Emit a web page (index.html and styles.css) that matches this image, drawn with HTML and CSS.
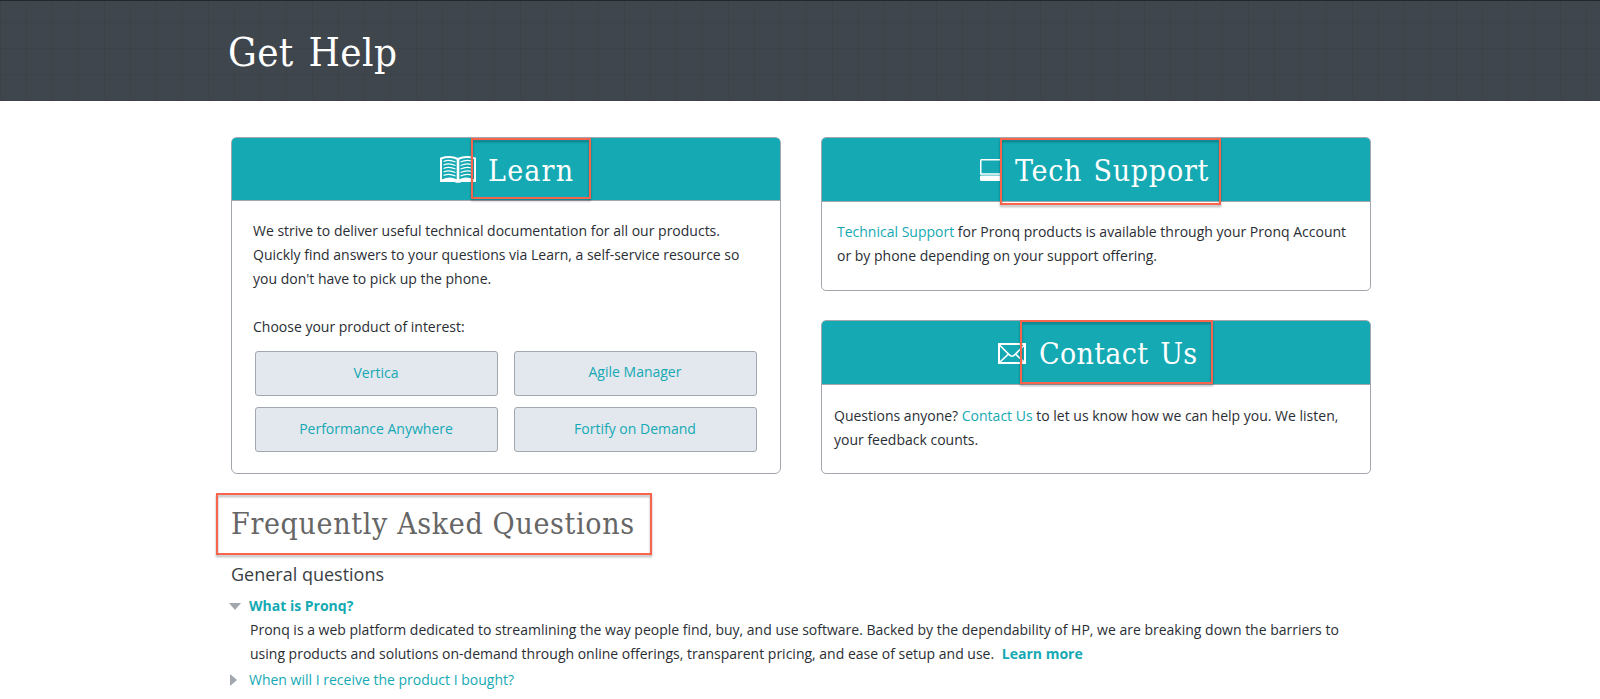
FILE: index.html
```html
<!DOCTYPE html>
<html lang="en">
<head>
<meta charset="utf-8">
<title>Get Help</title>
<link rel="stylesheet" href="styles.css">
</head>
<body>
<header class="banner"><h1 class="slab banner-title">Get Help</h1></header>
<main class="page">
  <div class="cards">
    <section class="card card-learn">
      <div class="card-head">
        <svg class="icon" width="36" height="27" viewBox="0 0 36 27"><path d="M1 25V2.500Q10-.5 18 3Q26-.5 35 2.500V25H21Q18 26.500 15 25Z" fill="none" stroke="#fff" stroke-width="2"/><path d="M18 3V25" stroke="#fff" stroke-width="2.600"/><path d="M2 24Q10 20 17 24ZM19 24Q26 20 34 24Z" fill="#fff" stroke="#fff"/><path d="M3.500 5.500Q9 3 15.500 6M3.500 9Q9 6.500 15.500 9.500M3.500 12.500Q9 10 15.500 13M3.500 16Q9 13.500 15.500 16.500M3.500 19.500Q9 17 15.500 20M20.500 6Q27 3 32.500 5.500M20.500 9.500Q27 6.500 32.500 9M20.500 13Q27 10 32.500 12.500M20.500 16.500Q27 13.500 32.500 16M20.500 20Q27 17 32.500 19.500" fill="none" stroke="#fff" stroke-width="1.100"/></svg>
        <h2 class="slab head-title t-learn">Learn</h2>
        <span class="mark mark-learn"></span>
      </div>
      <div class="card-body">
        <p>We strive to deliver useful technical documentation for all our products.<br>Quickly find answers to your questions via Learn, a self-service resource so<br>you don't have to pick up the phone.</p>
        <p class="choose">Choose your product of interest:</p>
        <div class="products">
          <a class="product">Vertica</a><a class="product raised">Agile Manager</a>
          <a class="product">Performance Anywhere</a><a class="product">Fortify on Demand</a>
        </div>
      </div>
    </section>
    <div class="side">
      <section class="card card-tech">
        <div class="card-head">
          <svg class="icon" width="20" height="22" viewBox="0 0 20 22"><path d="M20 .75H1.500Q.75 .75 .75 1.500V15H20" fill="none" stroke="#fff" stroke-width="1.500"/><path d="M1 16.500H20V22H1.500Q0 22 0 20.500V18Q0 16.500 1 16.500Z" fill="#fff"/></svg>
          <h2 class="slab head-title t-tech">Tech Support</h2>
          <span class="mark mark-tech"></span>
        </div>
        <div class="card-body"><p><a>Technical Support</a> for Pronq products is available through your Pronq Account<br>or by phone depending on your support offering.</p></div>
      </section>
      <section class="card card-contact">
        <div class="card-head">
          <svg class="icon" width="28" height="21" viewBox="0 0 28 21"><path d="M1 1H27V20H1Z" fill="none" stroke="#fff" stroke-width="2"/><path d="M1.500 2L11 11.500Q14 15 17 11.500L26.500 2M2 19L10.500 11M26 19L17.500 11" fill="none" stroke="#fff" stroke-width="1.700"/></svg>
          <h2 class="slab head-title t-contact">Contact Us</h2>
          <span class="mark mark-contact"></span>
        </div>
        <div class="card-body"><p>Questions anyone? <a>Contact Us</a> to let us know how we can help you. We listen,<br>your feedback counts.</p></div>
      </section>
    </div>
  </div>
  <section class="faq">
    <div class="faq-head"><h2 class="slab faq-title">Frequently Asked Questions</h2><span class="mark mark-faq"></span></div>
    <h3 class="group">General questions</h3>
    <div class="question"><span class="arrow arrow-open"><svg width="12" height="7"><path d="M0 0H12L6 7Z" fill="#a2a6ad"/></svg></span><a class="open">What is Pronq?</a></div>
    <p class="answer">Pronq is a web platform dedicated to streamlining the way people find, buy, and use software. Backed by the dependability of HP, we are breaking down the barriers to<br>using products and solutions on-demand through online offerings, transparent pricing, and ease of setup and use. <a class="open more">Learn more</a></p>
    <div class="question last"><span class="arrow"><svg width="7" height="12"><path d="M0 0L7 6L0 12Z" fill="#a2a6ad"/></svg></span><a>When will I receive the product I bought?</a></div>
  </section>
</main>
</body>
</html>
```
FILE: styles.css
```css
* { box-sizing: border-box; }
body { margin: 0; background: #fff; color: #2a2e34; font: 14px/24px "Open Sans", sans-serif; overflow: hidden; }
h1, h2, h3, p { margin: 0; font-weight: 400; }
a { color: #14a9b3; }
.slab { font-family: "DejaVu Serif Condensed", "DejaVu Serif", serif; font-stretch: condensed; white-space: nowrap; }
.banner {
  height: 101px; padding: 1px 0 0 228px; border-top: 1px solid #23282d; background-color: #42494f;
  background-image: linear-gradient(90deg, rgba(35,42,48,.1) 1px, transparent 1px), linear-gradient(rgba(35,42,48,.1) 1px, transparent 1px), radial-gradient(rgba(35,42,48,.2) .6px, transparent .8px);
  background-size: 26px 26px, 26px 26px, 2px 2px; background-position: 0 0, 0 21px, 0 0;
}
.banner-title { color: #fff; font-size: 40px; line-height: 100px; letter-spacing: .4px; word-spacing: 3px; }
.page { width: 1140px; margin: 0 0 0 231px; padding-top: 36px; }
.cards { display: grid; grid-template-columns: 550px 550px; gap: 40px; height: 337px; }
.side { display: flex; flex-direction: column; justify-content: space-between; }
.card { border: 1px solid #a2a6ad; border-radius: 6px; }
.card-tech, .card-contact { height: 154px; border-radius: 5px; }
.card-head { position: relative; display: flex; height: 64px; padding-top: 2px; background: #14a9b3; border-bottom: 1px solid #a2a6ad; border-radius: 4px 4px 0 0; }
.card-learn .card-head { height: 63px; padding: 3px 0 0 208px; }
.card-tech .card-head { padding-left: 158px; }
.card-contact .card-head { padding-left: 176px; }
.icon { flex: none; margin-top: 15px; }
.card-tech .icon { margin-top: 19px; }
.card-contact .icon { margin-top: 20px; }
.head-title { color: #fff; font-size: 30px; line-height: 61px; }
.card-learn .head-title { line-height: 59px; }
.t-learn { margin-left: 12px; letter-spacing: 1.2px; }
.t-tech { margin-left: 15px; letter-spacing: .75px; word-spacing: 2px; }
.t-contact { margin-left: 13px; letter-spacing: .3px; word-spacing: 3px; }
.mark { position: absolute; border: 2px solid #f9644c; filter: drop-shadow(0 2px 1px rgba(0,0,0,.3)); }
.mark-learn { left: 239px; top: 0; width: 120px; height: 61px; }
.mark-tech { left: 178px; top: 0; width: 221px; height: 67px; }
.mark-contact { left: 198px; top: -1px; width: 193px; height: 64px; }
.mark-faq { left: -15px; top: 0; width: 436px; height: 62px; }
.card-body { padding: 18px 0 0 21px; white-space: nowrap; }
.card-tech .card-body { padding-left: 15px; }
.card-contact .card-body { padding: 19px 0 0 12px; }
.choose { margin-top: 24px; }
.products { display: grid; grid-template-columns: 243px 243px; gap: 11px 16px; margin: 12px 0 0 2px; }
.product { height: 45px; padding-right: 1px; line-height: 41px; text-align: center; background: #e3e8ef; border: 1px solid #a2a8b0; border-radius: 3px; }
.raised { line-height: 39px; }
.faq { padding-top: 19px; white-space: nowrap; }
.faq-head { position: relative; height: 62px; }
.faq-title { font-size: 30px; line-height: 61px; color: #666; letter-spacing: .66px; }
.group { margin-top: 7px; font-size: 18px; line-height: 24px; color: #3a3e44; }
.question { display: flex; align-items: center; height: 24px; margin-left: -2px; }
.group + .question { margin-top: 8px; }
.arrow { display: flex; width: 20px; padding-left: 1px; }
.arrow-open { padding: 1px 0 0; }
.open { font-weight: 700; }
.answer { padding-left: 19px; }
.more { margin-left: 4px; }
.last { margin-top: 2px; }
```
